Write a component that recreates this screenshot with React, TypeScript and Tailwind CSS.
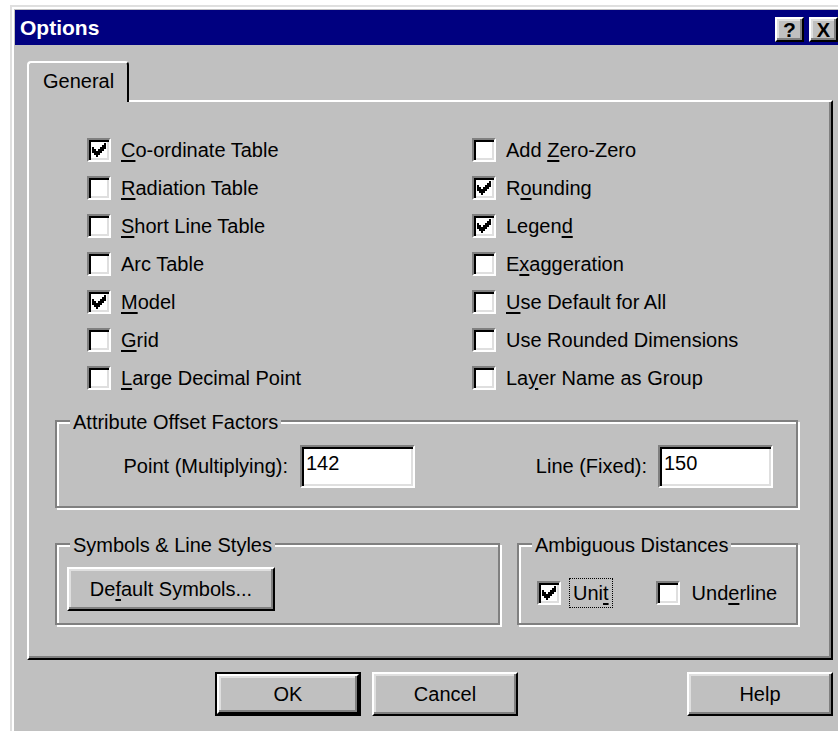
import { ReactElement, ReactNode } from "react";

type Option = { label: string; key?: number; checked?: boolean };

const leftOptions: Option[] = [
  { label: "Co-ordinate Table", key: 0, checked: true },
  { label: "Radiation Table", key: 0 },
  { label: "Short Line Table", key: 0 },
  { label: "Arc Table" },
  { label: "Model", key: 0, checked: true },
  { label: "Grid", key: 0 },
  { label: "Large Decimal Point", key: 0 },
];

const rightOptions: Option[] = [
  { label: "Add Zero-Zero", key: 4 },
  { label: "Rounding", key: 1, checked: true },
  { label: "Legend", key: 5, checked: true },
  { label: "Exaggeration", key: 1 },
  { label: "Use Default for All", key: 0 },
  { label: "Use Rounded Dimensions" },
  { label: "Layer Name as Group", key: 2 },
];

// classic 3d bevels
const raised =
  "border-2 border-t-white border-l-white border-r-black border-b-black shadow-[inset_-2px_-2px_0_#808080,inset_2px_2px_0_#dfdfdf]";
const sunken =
  "border-2 border-t-[#808080] border-l-[#808080] border-r-white border-b-white shadow-[inset_2px_2px_0_#000,inset_-2px_-2px_0_#dfdfdf]";

function Mnemonic({ text, at }: { text: string; at?: number }): ReactElement {
  if (at === undefined) return <>{text}</>;
  return (
    <>
      {text.slice(0, at)}
      <span className="underline decoration-2 underline-offset-[3px]">{text[at]}</span>
      {text.slice(at + 1)}
    </>
  );
}

function CheckMark(): ReactElement {
  return (
    <svg width="14" height="14" viewBox="0 0 7 7" shapeRendering="crispEdges">
      <path
        fill="#000"
        d="M6 0h1v1h-1z M5 1h2v1h-2z M0 2h1v1h-1z M4 2h3v1h-3z M0 3h2v1h-2z M3 3h3v1h-3z M0 4h5v1h-5z M1 5h3v1h-3z M2 6h1v1h-1z"
      />
    </svg>
  );
}

function CheckBox({ checked }: { checked?: boolean }): ReactElement {
  return (
    <span className={`flex h-[24px] w-[24px] shrink-0 items-center justify-center bg-white ${sunken}`}>
      {checked && <CheckMark />}
    </span>
  );
}

function OptionRow({ opt }: { opt: Option }): ReactElement {
  return (
    <div className="flex h-[38px] items-center gap-[10px]">
      <CheckBox checked={opt.checked} />
      <span>
        <Mnemonic text={opt.label} at={opt.key} />
      </span>
    </div>
  );
}

function GroupBox({ title, className, children }: { title: string; className: string; children?: ReactNode }): ReactElement {
  return (
    <div className={`relative border-2 border-[#808080] shadow-[2px_2px_0_#fff,inset_2px_2px_0_#fff] ${className}`}>
      <span className="absolute left-[13px] top-[-11px] bg-[#c0c0c0] px-[3px]">{title}</span>
      {children}
    </div>
  );
}

function Button({ children, className = "" }: { children: ReactNode; className?: string }): ReactElement {
  return (
    <div className={`flex items-center justify-center bg-[#c0c0c0] ${raised} ${className}`}>{children}</div>
  );
}

function TextBox({ value }: { value: string }): ReactElement {
  return (
    <div className={`h-[43px] w-[115px] bg-white pl-[4px] pt-[5px] ${sunken}`}>{value}</div>
  );
}

export default function App(): ReactElement {
  return (
    <div className="h-[731px] w-[838px] overflow-hidden bg-white pl-[10px] pt-[5px] font-['Liberation_Sans',Arial,sans-serif] text-[20px] leading-[23px] text-black">
      <div className="h-[760px] w-[837px] border-2 border-t-[#dfdfdf] border-l-[#dfdfdf] border-r-black border-b-black bg-[#c0c0c0] p-[3px] shadow-[inset_2px_2px_0_#fff,inset_-2px_-2px_0_#808080]">
        {/* title bar */}
        <div className="flex h-[35px] items-center bg-[#000080] pl-[5px]">
          <span className="text-[21px] font-bold text-white">Options</span>
          <div className="ml-auto mt-[4px] flex gap-[5px] pr-[4px]">
            <Button className="h-[25px] w-[29px]">
              <span className="text-[21px] font-bold leading-none">?</span>
            </Button>
            <Button className="h-[25px] w-[29px]">
              <span className="text-[20px] font-bold leading-none">X</span>
            </Button>
          </div>
        </div>

        <div className="mt-[16px] pl-[12px]">
          {/* tab strip */}
          <div className="relative z-10 -mb-[2px] flex h-[41px] w-[102px] items-start rounded-tl-[4px] rounded-tr-[4px] border-l-2 border-t-2 border-r-2 border-l-white border-t-white border-r-black bg-[#c0c0c0] pl-[14px] pt-[7px]">
            General
          </div>

          {/* tab page */}
          <div className="h-[560px] w-[806px] border-2 border-t-white border-l-white border-r-black border-b-black px-[26px] pt-[29px] shadow-[inset_-2px_-2px_0_#808080]">
            <div className="ml-[32px] flex">
              <div className="w-[385px]">
                {leftOptions.map((opt) => (
                  <OptionRow key={opt.label} opt={opt} />
                ))}
              </div>
              <div>
                {rightOptions.map((opt) => (
                  <OptionRow key={opt.label} opt={opt} />
                ))}
              </div>
            </div>

            <GroupBox title="Attribute Offset Factors" className="mt-[23px] h-[88px] w-[743px]">
              <div className="flex items-center pt-[23px]">
                <div className="flex w-[358px] items-center justify-end gap-[12px]">
                  <span>Point (Multiplying):</span>
                  <TextBox value="142" />
                </div>
                <div className="ml-auto flex items-center gap-[11px] pr-[23px]">
                  <span>Line (Fixed):</span>
                  <TextBox value="150" />
                </div>
              </div>
            </GroupBox>

            <div className="mt-[35px] flex gap-[17px]">
              <GroupBox title="Symbols & Line Styles" className="h-[82px] w-[445px]">
                <Button className="ml-[10px] mt-[22px] h-[44px] w-[208px]">
                  <Mnemonic text="Default Symbols..." at={2} />
                </Button>
              </GroupBox>
              <GroupBox title="Ambiguous Distances" className="h-[82px] w-[281px]">
                <div className="ml-[18px] mt-[33px] flex h-[30px] items-center">
                  <CheckBox checked />
                  <span className="ml-[8px] flex h-[30px] items-center border border-dotted border-black px-[3px]">
                    <Mnemonic text="Unit" at={3} />
                  </span>
                  <span className="ml-[43px]">
                    <CheckBox />
                  </span>
                  <span className="ml-[12px]">
                    <Mnemonic text="Underline" at={3} />
                  </span>
                </div>
              </GroupBox>
            </div>
          </div>

          {/* dialog buttons */}
          <div className="mt-[12px] flex w-[806px] pl-[188px]">
            <div className="border-2 border-black">
              <Button className="h-[40px] w-[142px]">OK</Button>
            </div>
            <Button className="ml-[11px] h-[44px] w-[146px]">Cancel</Button>
            <Button className="ml-auto h-[44px] w-[146px]">Help</Button>
          </div>
        </div>
      </div>
    </div>
  );
}
